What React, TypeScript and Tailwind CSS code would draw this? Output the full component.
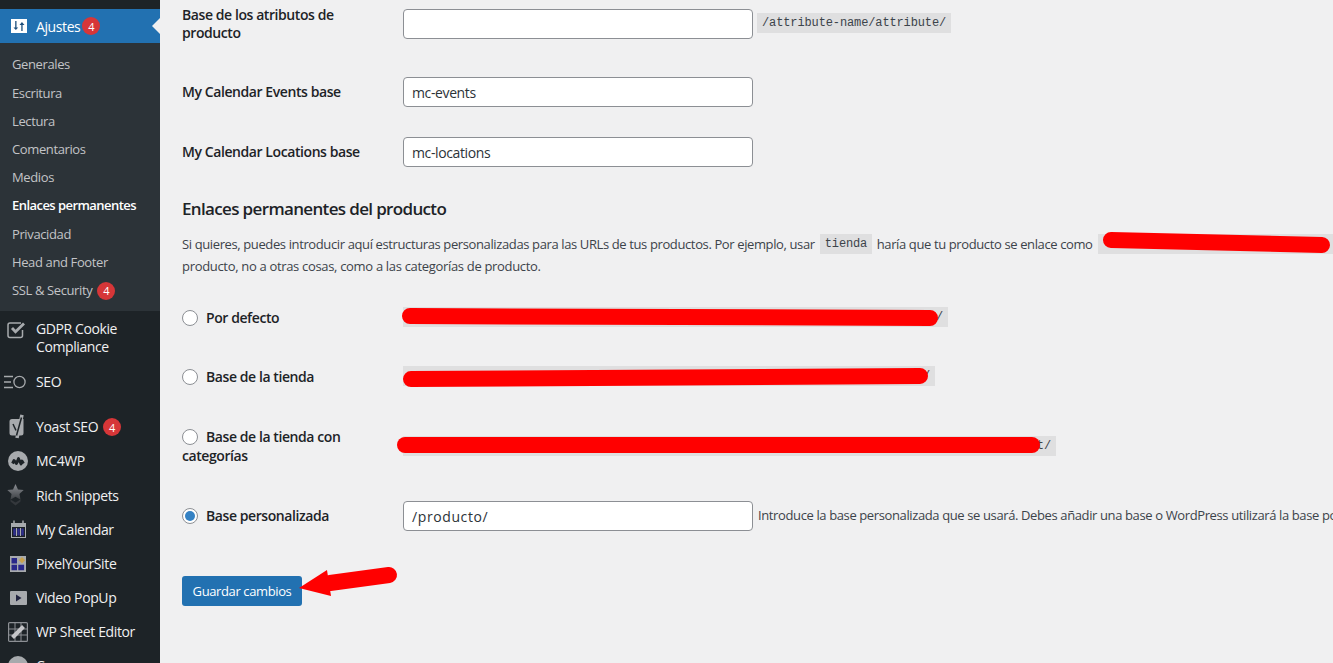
import type { ReactNode } from "react";

const submenu = ["Generales", "Escritura", "Lectura", "Comentarios", "Medios", "Enlaces permanentes", "Privacidad", "Head and Footer", "SSL & Security"];

function Badge({ className = "" }: { className?: string }) {
  return (
    <span className={"flex h-[18px] w-[18px] shrink-0 items-center justify-center rounded-full bg-[#d63638] text-[11px] leading-none tracking-normal text-white " + className}>
      4
    </span>
  );
}

function MenuItem({ icon, children, className = "h-[34.2px]" }: { icon: ReactNode; children: ReactNode; className?: string }) {
  return (
    <div className={"flex items-center text-[14px] leading-[18px] text-[#f0f0f1] " + className}>
      <div className="flex w-[36px] shrink-0 items-center justify-center">{icon}</div>
      {children}
    </div>
  );
}

function Code({ children, className = "" }: { children?: ReactNode; className?: string }) {
  return (
    <code className={"flex h-[20px] shrink-0 items-center whitespace-pre bg-[#dfdfe0] px-[5px] font-['Liberation_Mono',monospace] text-[12px] tracking-[-0.12px] text-[#3c434a] " + className}>
      {children}
    </code>
  );
}

function TextInput({ value, mono = false }: { value: string; mono?: boolean }) {
  return (
    <div className={"flex h-[30px] w-[350px] shrink-0 items-center rounded-[4px] border border-[#8c8f94] bg-white px-[8px] text-[14px] text-[#2c3338] " + (mono ? "tracking-[0.6px]" : "")}>
      {value}
    </div>
  );
}

function Radio({ checked = false }: { checked?: boolean }) {
  return (
    <span className="mr-[8px] flex h-[16px] w-[16px] shrink-0 items-center justify-center rounded-full border border-[#8c8f94] bg-white">
      {checked && <span className="h-[10px] w-[10px] rounded-full bg-[#3582c4]" />}
    </span>
  );
}

export default function App() {
  return (
    <div className="relative flex h-[663px] w-[1333px] overflow-hidden bg-[#f0f0f1] font-['Open_Sans',sans-serif] text-[13px] tracking-[-0.38px] text-[#3c434a]">
      {/* Sidebar */}
      <aside className="w-[160px] shrink-0 bg-[#1d2327] pt-[9px]">
        <div className="relative flex h-[34px] items-center bg-[#2271b1] text-[14px] tracking-[-0.4px] text-white">
          <div className="flex w-[38px] shrink-0 items-center justify-center">
            <svg width="16" height="14" viewBox="0 0 16 14">
              <path fill="#fff" d="M0 0h16v14H0z" />
              <path fill="#1d4f7c" d="M4.200 2h1.300v6.500H7.200L4.850 11 2.500 8.500h1.700z M10.300 12h1.300V6h1.900L10.950 3 8.500 6h1.800z" />
            </svg>
          </div>
          <span className="-ml-[2px]">Ajustes</span>
          <Badge className="ml-[2px]" />
          <span className="absolute right-0 top-[9px] h-0 w-0 border-y-[8px] border-r-[8px] border-y-transparent border-r-[#f0f0f1]" />
        </div>
        <div className="bg-[#2c3338] pb-[5.9px] pt-[8.1px]">
          {submenu.map((s) => (
            <div
              key={s}
              className={"flex h-[28.2px] items-center pl-[12px] text-[13px] " + (s === "Enlaces permanentes" ? "font-semibold tracking-[-0.55px] text-white" : "text-[#c3c4c7]")}
            >
              {s}
              {s === "SSL & Security" && <Badge className="ml-[5px]" />}
            </div>
          ))}
        </div>

        <MenuItem
          className="h-[52px] pt-[2px] tracking-[-0.4px]"
          icon={
            <svg width="20" height="18" viewBox="0 0 20 18" className="-ml-[2px] -mt-[16px]" fill="none" stroke="#a7aaad">
              <path strokeWidth="1.500" d="M15.500 9v5.500a2 2 0 0 1-2 2H3a2 2 0 0 1-2-2V4a2 2 0 0 1 2-2h11" />
              <path strokeWidth="2.800" d="M5 7l3.500 3.800L17 2.500" />
            </svg>
          }
        >
          <span>
            GDPR Cookie
            <br />
            Compliance
          </span>
        </MenuItem>
        <MenuItem
          className="mb-[11.400px] mt-[2px] h-[34px]"
          icon={
            <svg width="24" height="14" viewBox="0 0 24 14" className="-ml-[6px]" fill="none" stroke="#a7aaad" strokeWidth="1.300">
              <path d="M1 1.500h9M1 7h7M1 12.500h9" />
              <circle cx="16.500" cy="7" r="5.600" />
            </svg>
          }
        >
          SEO
        </MenuItem>
        <MenuItem
          icon={
            <svg width="18" height="26" viewBox="0 0 18 26">
              <path fill="#a7aaad" d="M3 5h11.500v14a2.500 2.500 0 0 1-2.500 2.500H3A2.500 2.500 0 0 1 .5 19V7.500A2.500 2.500 0 0 1 3 5z" />
              <path fill="none" stroke="#1d2327" strokeWidth="1.500" d="M4 10l3 6.500" />
              <path fill="none" stroke="#a7aaad" strokeWidth="3.500" d="M13 .8L8 24" />
              <path fill="none" stroke="#1d2327" strokeWidth="1.500" d="M12.500 3.500L7.500 21.500" />
            </svg>
          }
        >
          Yoast SEO
          <Badge className="ml-[5px]" />
        </MenuItem>
        <MenuItem
          icon={
            <svg width="20" height="20" viewBox="0 0 20 20">
              <circle cx="10" cy="10" r="10" fill="#a7aaad" />
              <path fill="none" stroke="#1d2327" strokeWidth="2.800" strokeLinejoin="round" d="M4.500 12.500l1.500-3 2.500 3 2-5 2.500 5.500 1-3 1.500 2.500" />
            </svg>
          }
        >
          MC4WP
        </MenuItem>
        <MenuItem
          icon={
            <svg width="17" height="24" viewBox="0 0 17 24" className="-ml-[6px]">
              <defs>
                <linearGradient id="snip" x1="0" y1="0" x2="0" y2="1">
                  <stop offset="0" stopColor="#8c8f94" />
                  <stop offset="1" stopColor="#3a3e42" />
                </linearGradient>
              </defs>
              <path fill="url(#snip)" d="M8.500 0l2.500 5.500 5.700.6-4.300 3.900 1.200 5.800-5.100-3-5.100 3 1.200-5.800L.3 6.100 6 5.500z" />
              <path fill="#34383c" d="M3.500 15.500l5 3 5-3v2l-5 4-5-4z" />
            </svg>
          }
        >
          Rich Snippets
        </MenuItem>
        <MenuItem
          icon={
            <svg width="17" height="19" viewBox="0 0 17 19" fill="none">
              <rect x="1" y="3" width="15" height="15" fill="#a7aaad" />
              <rect x="2" y="7" width="13" height="10" fill="#1d2327" />
              <path stroke="#a7aaad" strokeWidth="1.500" d="M4 0.500v4M13 0.500v4" />
              <path stroke="#2f2f8f" strokeWidth="2.500" d="M4.500 8.500v7M8.500 8.500v7M12.500 8.500v7" />
              <path stroke="#a7aaad" strokeWidth="1" d="M6.500 8v8M10.500 8v8" />
            </svg>
          }
        >
          My Calendar
        </MenuItem>
        <MenuItem
          icon={
            <svg width="16" height="16" viewBox="0 0 16 16">
              <path fill="#a7aaad" d="M0 0h16v16H0z" />
              <path fill="#29288a" d="M1.500 2h5.500v5.500H1.500zM1.500 8.800h5.500v5.500H1.500zM8.300 8.800h5.800v5.500H8.300z" />
              <path fill="#c9a24d" d="M12 1l3.200 3.200L12 7.300 8.800 4.200z" />
            </svg>
          }
        >
          PixelYourSite
        </MenuItem>
        <MenuItem
          icon={
            <svg width="17" height="14" viewBox="0 0 17 14" className="ml-[1px]">
              <rect width="17" height="14" rx="1" fill="#a7aaad" />
              <path fill="#20233f" d="M6 3.500l5.500 3.500L6 10.500z" />
            </svg>
          }
        >
          Video PopUp
        </MenuItem>
        <MenuItem
          icon={
            <svg width="20" height="20" viewBox="0 0 20 20" fill="none">
              <rect x="0.600" y="0.600" width="18.800" height="18.800" rx="1" stroke="#8c8f94" strokeWidth="1.200" />
              <path stroke="#8c8f94" d="M1 7h18M1 13h18M7 1v18M13 1v18" />
              <path stroke="#c3c4c7" strokeWidth="4" d="M4.500 15.500L15.500 4.500" />
            </svg>
          }
        >
          WP Sheet Editor
        </MenuItem>
        <MenuItem
          icon={
            <svg width="20" height="20" viewBox="0 0 20 20">
              <circle cx="10" cy="10" r="10" fill="#a7aaad" />
            </svg>
          }
        >
          Compresor
        </MenuItem>
      </aside>

      {/* Main */}
      <main className="min-w-0 flex-1 pl-[22px] pt-[9px]">
        <div className="flex h-[30px]">
          <div className="w-[221px] shrink-0 text-[14px] font-semibold leading-[18px] tracking-[-0.42px] text-[#1d2327]">
            <div className="mt-[-3px]">
              Base de los atributos de
              <br />
              producto
            </div>
          </div>
          <TextInput value="" />
          <Code className="ml-[4px] mt-[4px]">/attribute-name/attribute/</Code>
        </div>

        <div className="mt-[38px] flex h-[30px] items-center">
          <div className="-mt-[2px] w-[221px] shrink-0 text-[14px] font-semibold tracking-[-0.42px] text-[#1d2327]">My Calendar Events base</div>
          <TextInput value="mc-events" />
        </div>

        <div className="mt-[30px] flex h-[30px] items-center">
          <div className="-mt-[2px] w-[221px] shrink-0 text-[14px] font-semibold tracking-[-0.42px] text-[#1d2327]">My Calendar Locations base</div>
          <TextInput value="mc-locations" />
        </div>

        <h2 className="mt-[30px] text-[17px] font-semibold leading-[24px] tracking-[-0.65px] text-[#1d2327]">Enlaces permanentes del producto</h2>

        <div className="mt-[12px] whitespace-nowrap leading-[22px]">
          <div className="flex items-center">
            Si quieres, puedes introducir aquí estructuras personalizadas para las URLs de tus productos. Por ejemplo, usar
            <Code className="mx-[5px] w-[52px]">tienda</Code>
            haría que tu producto se enlace como
            <Code className="ml-[5px] w-[260px]" />
          </div>
          <div className="tracking-[-0.32px]">producto, no a otras cosas, como a las categorías de producto.</div>
        </div>

        <div className="mt-[26px] flex h-[30px] items-center">
          <label className="flex w-[221px] shrink-0 items-center text-[14px] font-semibold tracking-[-0.42px] text-[#1d2327]">
            <Radio />
            <span className="-mt-[2px]">Por defecto</span>
          </label>
          <Code className="-mt-[2px] w-[545px] justify-end">/</Code>
        </div>

        <div className="mt-[29px] flex h-[30px] items-center">
          <label className="flex w-[221px] shrink-0 items-center text-[14px] font-semibold tracking-[-0.42px] text-[#1d2327]">
            <Radio />
            <span className="-mt-[2px]">Base de la tienda</span>
          </label>
          <Code className="-mt-[2px] w-[532px] justify-end">/</Code>
        </div>

        <div className="mt-[35px] flex h-[38px] items-center">
          <label className="w-[221px] shrink-0 text-[14px] font-semibold leading-[19px] tracking-[-0.42px] text-[#1d2327]">
            <span className="flex items-center">
              <Radio />
              Base de la tienda con
            </span>
            categorías
          </label>
          <Code className="w-[653px] justify-end">t/</Code>
        </div>

        <div className="mt-[36px] flex h-[30px] items-center whitespace-nowrap">
          <label className="flex w-[221px] shrink-0 items-center text-[14px] font-semibold tracking-[-0.42px] text-[#1d2327]">
            <Radio checked />
            <span className="-mt-[2px]">Base personalizada</span>
          </label>
          <TextInput value="/producto/" mono />
          <span className="ml-[5px]">Introduce la base personalizada que se usará. Debes añadir una base o WordPress utilizará la base por defecto.</span>
        </div>

        <button className="mt-[45px] flex h-[30px] w-[120px] items-center justify-center rounded-[3px] bg-[#2271b1] pt-[1px] text-[13px] text-white">
          Guardar cambios
        </button>
      </main>

      {/* Red marker annotations drawn on top of the screenshot */}
      <svg width="1333" height="663" viewBox="0 0 1333 663" className="pointer-events-none absolute left-0 top-0">
        <g fill="none" stroke="#ff0000" strokeLinecap="round" strokeWidth="16">
          <path d="M1111 240L1322 245" />
          <path d="M410 316L930 318" />
          <path d="M411 379L920 376" />
          <path d="M405 445L1032 445" />
          <path d="M330 583L389 575" />
        </g>
        <path fill="#ff0000" d="M299 588L327 570L331 596z" />
      </svg>
    </div>
  );
}
